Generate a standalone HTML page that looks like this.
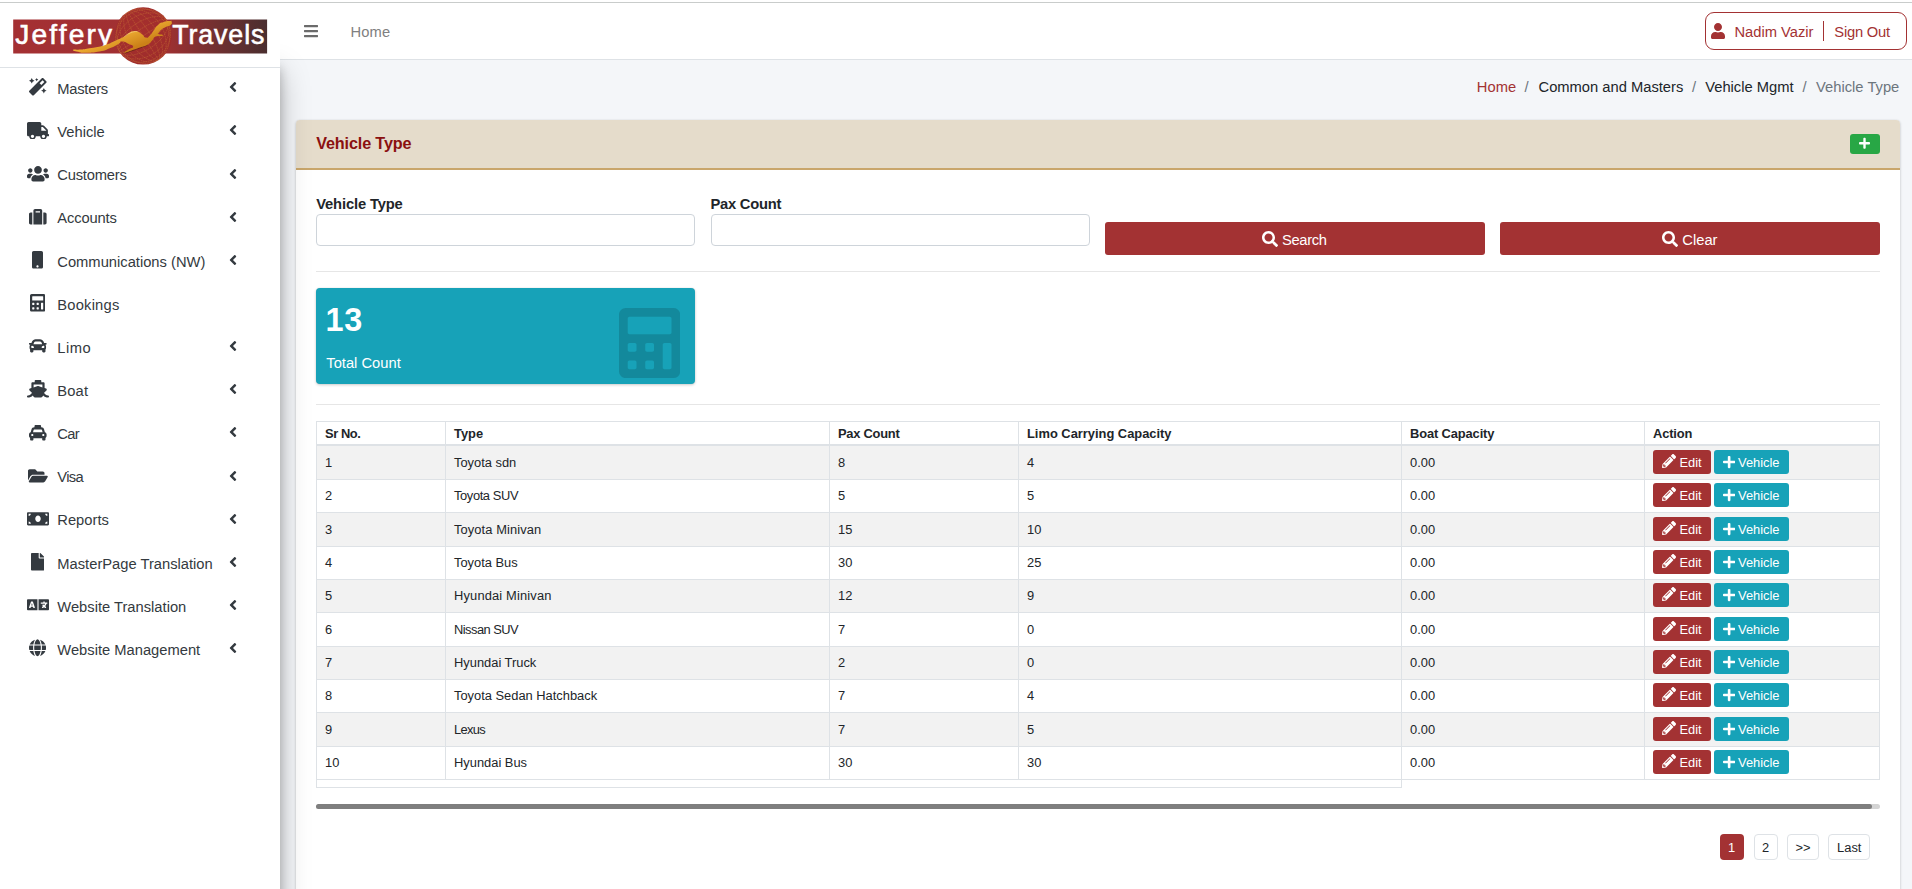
<!DOCTYPE html><html lang="en"><head><meta charset="utf-8"><title>Vehicle Type</title><style>
html,body{margin:0;padding:0}
body{width:1912px;height:889px;overflow:hidden;position:relative;background:#f4f6f9;font-family:"Liberation Sans", sans-serif;}
.t{position:absolute;white-space:nowrap;line-height:1;margin:0;padding:0;font-weight:400;text-decoration:none}
.b,.i{position:absolute;box-sizing:border-box;display:block}

</style></head><body>
<div class="b" style="left:0px;top:0px;width:1912px;height:60px;background:#fff;border-bottom:1px solid #dee2e6;"></div>
<div class="b" style="left:0px;top:2px;width:1912px;height:1px;background:#c9cccb;"></div>
<nav>
<svg class="i" style="left:304.00px;top:23.00px;" width="14.00" height="16.00" viewBox="0 0 448 512"><path fill="#6b6b6b" d="M16 132h416c8.837 0 16-7.163 16-16V76c0-8.837-7.163-16-16-16H16C7.163 60 0 67.163 0 76v40c0 8.837 7.163 16 16 16zm0 160h416c8.837 0 16-7.163 16-16v-40c0-8.837-7.163-16-16-16H16c-8.837 0-16 7.163-16 16v40c0 8.837 7.163 16 16 16zm0 160h416c8.837 0 16-7.163 16-16v-40c0-8.837-7.163-16-16-16H16c-8.837 0-16 7.163-16 16v40c0 8.837 7.163 16 16 16z"/></svg>
<a class="t " style="top:24.94px;font-size:14.72px;color:#808080;left:350.60px;letter-spacing:0.1px;">Home</a>
<div class="b" style="left:1705px;top:12px;width:202px;height:38px;border:1px solid #a33233;border-radius:9px;background:#fff;"></div>
<svg class="i" style="left:1711.30px;top:23.00px;" width="14.00" height="16.00" viewBox="0 0 448 512"><path fill="#a33233" d="M224 256c70.700 0 128-57.300 128-128S294.700 0 224 0 96 57.300 96 128s57.300 128 128 128zm89.600 32h-16.700c-22.200 10.200-46.900 16-72.900 16s-50.600-5.800-72.900-16h-16.700C60.200 288 0 348.200 0 422.400V464c0 26.500 21.500 48 48 48h352c26.500 0 48-21.500 48-48v-41.600c0-74.200-60.200-134.400-134.400-134.400z"/></svg>
<span class="t " style="top:25.04px;font-size:14.72px;color:#a33233;left:1734.40px;">Nadim Vazir</span>
<div class="b" style="left:1823px;top:21px;width:1px;height:20px;background:#a33233;"></div>
<a class="t " style="top:25.04px;font-size:14.72px;color:#a33233;left:1834.30px;letter-spacing:-0.2px;">Sign Out</a>
</nav>
<ol style="margin:0;padding:0;list-style:none">
<li class="t " style="top:79.74px;font-size:14.72px;color:#a33233;left:1476.70px;letter-spacing:0.1px;">Home</li>
<li class="t " style="top:79.74px;font-size:14.72px;color:#6c757d;left:1524.40px;">/</li>
<li class="t " style="top:79.74px;font-size:14.72px;color:#212529;left:1538.50px;">Common and Masters</li>
<li class="t " style="top:79.74px;font-size:14.72px;color:#6c757d;left:1691.90px;">/</li>
<li class="t " style="top:79.74px;font-size:14.72px;color:#212529;left:1705.20px;">Vehicle Mgmt</li>
<li class="t " style="top:79.74px;font-size:14.72px;color:#6c757d;left:1802.50px;">/</li>
<li class="t " style="top:79.74px;font-size:14.72px;color:#6c757d;left:1816.10px;">Vehicle Type</li>
</ol>
<div class="b" style="left:296px;top:120px;width:1604px;height:800px;background:#fff;border-radius:4px;box-shadow:0 0 1px rgba(0,0,0,.125),0 1px 3px rgba(0,0,0,.2);"></div>
<div class="b" style="left:296px;top:120px;width:1604px;height:50px;background:#e5dccb;border-bottom:2px solid #c9a66b;border-radius:4px 4px 0 0;"></div>
<h3 class="t " style="top:134.59px;font-size:16.19px;color:#8b1010;left:316.20px;font-weight:700;letter-spacing:-0.14px;">Vehicle Type</h3>
<div class="b" style="left:1850px;top:134px;width:30px;height:20px;background:#28a745;border-radius:3px;"></div>
<svg class="i" style="left:1859.39px;top:137.40px;" width="11.03" height="12.60" viewBox="0 0 448 512"><path fill="#fff" d="M416 208H272V64c0-17.670-14.330-32-32-32h-32c-17.670 0-32 14.330-32 32v144H32c-17.670 0-32 14.330-32 32v32c0 17.670 14.330 32 32 32h144v144c0 17.670 14.330 32 32 32h32c17.670 0 32-14.330 32-32V304h144c17.670 0 32-14.330 32-32v-32c0-17.670-14.330-32-32-32z"/></svg>
<label class="t " style="top:196.64px;font-size:14.72px;color:#212529;left:316.20px;font-weight:700;letter-spacing:-0.14px;">Vehicle Type</label>
<label class="t " style="top:196.64px;font-size:14.72px;color:#212529;left:710.50px;font-weight:700;letter-spacing:-0.25px;">Pax Count</label>
<div class="b" style="left:316px;top:214px;width:379px;height:32px;background:#fff;border:1px solid #ced4da;border-radius:4px;"></div>
<div class="b" style="left:710.5px;top:214px;width:379px;height:32px;background:#fff;border:1px solid #ced4da;border-radius:4px;"></div>
<div class="b" style="left:1105px;top:222px;width:380px;height:33px;background:#a33233;border-radius:3px;"></div>
<div class="b" style="left:1500px;top:222px;width:380px;height:33px;background:#a33233;border-radius:3px;"></div>
<svg class="i" style="left:1262.00px;top:230.50px;" width="16.00" height="16.00" viewBox="0 0 512 512"><path fill="#fff" d="M505 442.700L405.300 343c-4.500-4.500-10.600-7-17-7H372c27.600-35.300 44-79.700 44-128C416 93.100 322.900 0 208 0S0 93.100 0 208s93.100 208 208 208c48.300 0 92.700-16.400 128-44v16.300c0 6.400 2.500 12.500 7 17l99.700 99.700c9.400 9.400 24.600 9.400 33.900 0l28.300-28.300c9.400-9.400 9.400-24.600.1-34zM208 336c-70.700 0-128-57.200-128-128 0-70.700 57.200-128 128-128 70.700 0 128 57.200 128 128 0 70.700-57.200 128-128 128z"/></svg>
<span class="t " style="top:233.14px;font-size:14.72px;color:#fff;left:1282.00px;letter-spacing:-0.32px;">Search</span>
<svg class="i" style="left:1662.30px;top:230.50px;" width="16.00" height="16.00" viewBox="0 0 512 512"><path fill="#fff" d="M505 442.700L405.300 343c-4.500-4.500-10.600-7-17-7H372c27.600-35.300 44-79.700 44-128C416 93.100 322.900 0 208 0S0 93.100 0 208s93.100 208 208 208c48.300 0 92.700-16.400 128-44v16.300c0 6.400 2.500 12.500 7 17l99.700 99.700c9.400 9.400 24.600 9.400 33.900 0l28.300-28.300c9.400-9.400 9.400-24.600.1-34zM208 336c-70.700 0-128-57.200-128-128 0-70.700 57.200-128 128-128 70.700 0 128 57.200 128 128 0 70.700-57.200 128-128 128z"/></svg>
<span class="t " style="top:233.14px;font-size:14.72px;color:#fff;left:1682.30px;">Clear</span>
<div class="b" style="left:316px;top:271px;width:1564px;height:1px;background:#e6e6e6;"></div>
<div class="b" style="left:316px;top:288px;width:379px;height:95.5px;background:#17a2b8;border-radius:4px;box-shadow:0 0 1px rgba(0,0,0,.125),0 1px 3px rgba(0,0,0,.2);"></div>
<h3 class="t " style="top:303.89px;font-size:32.38px;color:#fff;left:325.60px;font-weight:700;letter-spacing:0.7px;">13</h3>
<p class="t " style="top:356.24px;font-size:14.72px;color:#fff;left:326.30px;">Total Count</p>
<svg class="i" style="left:619.00px;top:308.00px;" width="61.25" height="70.00" viewBox="0 0 448 512"><path fill="rgba(0,0,0,.15)" d="M400 0H48C22.400 0 0 22.400 0 48v416c0 25.600 22.400 48 48 48h352c25.600 0 48-22.400 48-48V48c0-25.600-22.400-48-48-48zM128 435.200c0 6.400-6.400 12.800-12.800 12.800H76.800c-6.400 0-12.800-6.400-12.800-12.800v-38.400c0-6.400 6.400-12.800 12.800-12.800h38.400c6.400 0 12.800 6.400 12.800 12.800v38.400zm0-128c0 6.400-6.400 12.800-12.800 12.800H76.800c-6.400 0-12.800-6.400-12.800-12.800v-38.400c0-6.400 6.400-12.800 12.800-12.800h38.400c6.400 0 12.800 6.400 12.800 12.800v38.400zm128 128c0 6.400-6.400 12.800-12.800 12.800h-38.400c-6.400 0-12.800-6.400-12.800-12.800v-38.400c0-6.400 6.400-12.800 12.800-12.800h38.400c6.400 0 12.800 6.400 12.800 12.800v38.400zm0-128c0 6.400-6.400 12.800-12.800 12.800h-38.400c-6.400 0-12.800-6.400-12.800-12.800v-38.400c0-6.400 6.400-12.800 12.800-12.800h38.400c6.400 0 12.800 6.400 12.800 12.800v38.400zm128 128c0 6.400-6.400 12.800-12.800 12.800h-38.400c-6.400 0-12.800-6.400-12.800-12.800V268.800c0-6.400 6.400-12.800 12.800-12.800h38.400c6.400 0 12.800 6.400 12.800 12.800v166.400zm0-256c0 6.400-6.400 12.800-12.800 12.800H76.800c-6.400 0-12.800-6.400-12.800-12.800V76.800C64 70.400 70.400 64 76.800 64h294.400c6.400 0 12.800 6.400 12.800 12.800v102.400z"/></svg>
<div class="b" style="left:316px;top:404px;width:1564px;height:1px;background:#e6e6e6;"></div>
<div role="table">
<div class="b" style="left:316px;top:421px;width:1564px;height:1px;background:#dee2e6;"></div>
<div class="b" style="left:316px;top:444px;width:1564px;height:2px;background:#dee2e6;"></div>
<span class="t th" style="top:427.50px;font-size:12.88px;color:#212529;left:325.00px;font-weight:700;letter-spacing:-0.4px;">Sr No.</span>
<span class="t th" style="top:427.50px;font-size:12.88px;color:#212529;left:454.00px;font-weight:700;">Type</span>
<span class="t th" style="top:427.50px;font-size:12.88px;color:#212529;left:838.00px;font-weight:700;letter-spacing:-0.25px;">Pax Count</span>
<span class="t th" style="top:427.50px;font-size:12.88px;color:#212529;left:1027.00px;font-weight:700;">Limo Carrying Capacity</span>
<span class="t th" style="top:427.50px;font-size:12.88px;color:#212529;left:1410.00px;font-weight:700;letter-spacing:-0.12px;">Boat Capacity</span>
<span class="t th" style="top:427.50px;font-size:12.88px;color:#212529;left:1653.00px;font-weight:700;letter-spacing:-0.16px;">Action</span>
<div class="b" style="left:316px;top:446px;width:1564px;height:33px;background:#f2f2f2;"></div>
<div class="b" style="left:316px;top:479px;width:1564px;height:1px;background:#dee2e6;"></div>
<span class="t " style="top:457.10px;font-size:12.88px;color:#212529;left:325.00px;">1</span>
<span class="t " style="top:457.10px;font-size:12.88px;color:#212529;left:454.00px;">Toyota sdn</span>
<span class="t " style="top:457.10px;font-size:12.88px;color:#212529;left:838.00px;">8</span>
<span class="t " style="top:457.10px;font-size:12.88px;color:#212529;left:1027.00px;">4</span>
<span class="t " style="top:457.10px;font-size:12.88px;color:#212529;left:1410.00px;">0.00</span>
<div class="b" style="left:1653px;top:450px;width:58px;height:23.6px;background:#a33233;border-radius:3px;"></div>
<svg class="i" style="left:1661.60px;top:454.40px;" width="14.00" height="14.00" viewBox="0 0 512 512"><path fill="#fff" d="M497.900 142.100l-46.100 46.100c-4.700 4.700-12.300 4.700-17 0l-111-111c-4.700-4.700-4.700-12.300 0-17l46.100-46.100c18.700-18.700 49.100-18.700 67.900 0l60.100 60.100c18.800 18.700 18.800 49.100 0 67.900zM284.200 99.800L21.600 362.400.4 483.900c-2.900 16.400 11.400 30.600 27.800 27.800l121.500-21.300 262.600-262.600c4.700-4.700 4.700-12.300 0-17l-111-111c-4.800-4.700-12.400-4.700-17.100 0zM124.100 339.900c-5.500-5.500-5.500-14.300 0-19.800l154-154c5.500-5.500 14.300-5.500 19.800 0s5.500 14.300 0 19.800l-154 154c-5.500 5.500-14.300 5.500-19.800 0zM88 424h48v36.300l-64.500 11.300-31.100-31.100L51.700 376H88v48z"/></svg>
<span class="t " style="top:457.00px;font-size:12.88px;color:#fff;left:1679.40px;">Edit</span>
<div class="b" style="left:1714px;top:450px;width:75px;height:23.6px;background:#17a2b8;border-radius:3px;"></div>
<svg class="i" style="left:1722.70px;top:454.90px;" width="12.25" height="14.00" viewBox="0 0 448 512"><path fill="#fff" d="M416 208H272V64c0-17.670-14.330-32-32-32h-32c-17.670 0-32 14.330-32 32v144H32c-17.670 0-32 14.330-32 32v32c0 17.670 14.330 32 32 32h144v144c0 17.670 14.330 32 32 32h32c17.670 0 32-14.330 32-32V304h144c17.670 0 32-14.330 32-32v-32c0-17.670-14.330-32-32-32z"/></svg>
<span class="t " style="top:457.00px;font-size:12.88px;color:#fff;left:1738.00px;">Vehicle</span>
<div class="b" style="left:316px;top:512px;width:1564px;height:1px;background:#dee2e6;"></div>
<span class="t " style="top:490.43px;font-size:12.88px;color:#212529;left:325.00px;">2</span>
<span class="t " style="top:490.43px;font-size:12.88px;color:#212529;left:454.00px;letter-spacing:-0.38px;">Toyota SUV</span>
<span class="t " style="top:490.43px;font-size:12.88px;color:#212529;left:838.00px;">5</span>
<span class="t " style="top:490.43px;font-size:12.88px;color:#212529;left:1027.00px;">5</span>
<span class="t " style="top:490.43px;font-size:12.88px;color:#212529;left:1410.00px;">0.00</span>
<div class="b" style="left:1653px;top:483px;width:58px;height:23.6px;background:#a33233;border-radius:3px;"></div>
<svg class="i" style="left:1661.60px;top:487.40px;" width="14.00" height="14.00" viewBox="0 0 512 512"><path fill="#fff" d="M497.900 142.100l-46.100 46.100c-4.700 4.700-12.300 4.700-17 0l-111-111c-4.700-4.700-4.700-12.300 0-17l46.100-46.100c18.700-18.700 49.100-18.700 67.900 0l60.100 60.100c18.800 18.700 18.800 49.100 0 67.900zM284.200 99.800L21.600 362.400.4 483.900c-2.900 16.400 11.400 30.600 27.800 27.800l121.500-21.300 262.600-262.600c4.700-4.700 4.700-12.300 0-17l-111-111c-4.800-4.700-12.400-4.700-17.100 0zM124.100 339.900c-5.500-5.500-5.500-14.300 0-19.800l154-154c5.500-5.500 14.300-5.500 19.800 0s5.500 14.300 0 19.800l-154 154c-5.500 5.500-14.300 5.500-19.800 0zM88 424h48v36.300l-64.500 11.300-31.100-31.100L51.700 376H88v48z"/></svg>
<span class="t " style="top:490.33px;font-size:12.88px;color:#fff;left:1679.40px;">Edit</span>
<div class="b" style="left:1714px;top:483px;width:75px;height:23.6px;background:#17a2b8;border-radius:3px;"></div>
<svg class="i" style="left:1722.70px;top:487.90px;" width="12.25" height="14.00" viewBox="0 0 448 512"><path fill="#fff" d="M416 208H272V64c0-17.670-14.330-32-32-32h-32c-17.670 0-32 14.330-32 32v144H32c-17.670 0-32 14.330-32 32v32c0 17.670 14.330 32 32 32h144v144c0 17.670 14.330 32 32 32h32c17.670 0 32-14.330 32-32V304h144c17.670 0 32-14.330 32-32v-32c0-17.670-14.330-32-32-32z"/></svg>
<span class="t " style="top:490.33px;font-size:12.88px;color:#fff;left:1738.00px;">Vehicle</span>
<div class="b" style="left:316px;top:513px;width:1564px;height:33px;background:#f2f2f2;"></div>
<div class="b" style="left:316px;top:546px;width:1564px;height:1px;background:#dee2e6;"></div>
<span class="t " style="top:523.76px;font-size:12.88px;color:#212529;left:325.00px;">3</span>
<span class="t " style="top:523.76px;font-size:12.88px;color:#212529;left:454.00px;letter-spacing:0.1px;">Toyota Minivan</span>
<span class="t " style="top:523.76px;font-size:12.88px;color:#212529;left:838.00px;">15</span>
<span class="t " style="top:523.76px;font-size:12.88px;color:#212529;left:1027.00px;">10</span>
<span class="t " style="top:523.76px;font-size:12.88px;color:#212529;left:1410.00px;">0.00</span>
<div class="b" style="left:1653px;top:517px;width:58px;height:23.6px;background:#a33233;border-radius:3px;"></div>
<svg class="i" style="left:1661.60px;top:521.40px;" width="14.00" height="14.00" viewBox="0 0 512 512"><path fill="#fff" d="M497.900 142.100l-46.100 46.100c-4.700 4.700-12.300 4.700-17 0l-111-111c-4.700-4.700-4.700-12.300 0-17l46.100-46.100c18.700-18.700 49.100-18.700 67.900 0l60.100 60.100c18.800 18.700 18.800 49.100 0 67.900zM284.200 99.800L21.600 362.400.4 483.900c-2.900 16.400 11.400 30.600 27.800 27.800l121.500-21.300 262.600-262.600c4.700-4.700 4.700-12.300 0-17l-111-111c-4.800-4.700-12.400-4.700-17.100 0zM124.100 339.900c-5.500-5.500-5.500-14.300 0-19.800l154-154c5.500-5.500 14.300-5.500 19.800 0s5.500 14.300 0 19.800l-154 154c-5.500 5.500-14.300 5.500-19.800 0zM88 424h48v36.300l-64.500 11.300-31.100-31.100L51.700 376H88v48z"/></svg>
<span class="t " style="top:523.66px;font-size:12.88px;color:#fff;left:1679.40px;">Edit</span>
<div class="b" style="left:1714px;top:517px;width:75px;height:23.6px;background:#17a2b8;border-radius:3px;"></div>
<svg class="i" style="left:1722.70px;top:521.90px;" width="12.25" height="14.00" viewBox="0 0 448 512"><path fill="#fff" d="M416 208H272V64c0-17.670-14.330-32-32-32h-32c-17.670 0-32 14.330-32 32v144H32c-17.670 0-32 14.330-32 32v32c0 17.670 14.330 32 32 32h144v144c0 17.670 14.330 32 32 32h32c17.670 0 32-14.330 32-32V304h144c17.670 0 32-14.330 32-32v-32c0-17.670-14.330-32-32-32z"/></svg>
<span class="t " style="top:523.66px;font-size:12.88px;color:#fff;left:1738.00px;">Vehicle</span>
<div class="b" style="left:316px;top:579px;width:1564px;height:1px;background:#dee2e6;"></div>
<span class="t " style="top:557.10px;font-size:12.88px;color:#212529;left:325.00px;">4</span>
<span class="t " style="top:557.10px;font-size:12.88px;color:#212529;left:454.00px;">Toyota Bus</span>
<span class="t " style="top:557.10px;font-size:12.88px;color:#212529;left:838.00px;">30</span>
<span class="t " style="top:557.10px;font-size:12.88px;color:#212529;left:1027.00px;">25</span>
<span class="t " style="top:557.10px;font-size:12.88px;color:#212529;left:1410.00px;">0.00</span>
<div class="b" style="left:1653px;top:550px;width:58px;height:23.6px;background:#a33233;border-radius:3px;"></div>
<svg class="i" style="left:1661.60px;top:554.40px;" width="14.00" height="14.00" viewBox="0 0 512 512"><path fill="#fff" d="M497.900 142.100l-46.100 46.100c-4.700 4.700-12.300 4.700-17 0l-111-111c-4.700-4.700-4.700-12.300 0-17l46.100-46.100c18.700-18.700 49.100-18.700 67.900 0l60.100 60.100c18.800 18.700 18.800 49.100 0 67.900zM284.200 99.800L21.600 362.400.4 483.900c-2.900 16.400 11.400 30.600 27.800 27.800l121.500-21.300 262.600-262.600c4.700-4.700 4.700-12.300 0-17l-111-111c-4.800-4.700-12.400-4.700-17.100 0zM124.100 339.900c-5.500-5.500-5.500-14.300 0-19.800l154-154c5.500-5.500 14.300-5.500 19.800 0s5.500 14.300 0 19.800l-154 154c-5.500 5.500-14.300 5.500-19.800 0zM88 424h48v36.300l-64.500 11.300-31.100-31.100L51.700 376H88v48z"/></svg>
<span class="t " style="top:557.00px;font-size:12.88px;color:#fff;left:1679.40px;">Edit</span>
<div class="b" style="left:1714px;top:550px;width:75px;height:23.6px;background:#17a2b8;border-radius:3px;"></div>
<svg class="i" style="left:1722.70px;top:554.90px;" width="12.25" height="14.00" viewBox="0 0 448 512"><path fill="#fff" d="M416 208H272V64c0-17.670-14.330-32-32-32h-32c-17.670 0-32 14.330-32 32v144H32c-17.670 0-32 14.330-32 32v32c0 17.670 14.330 32 32 32h144v144c0 17.670 14.330 32 32 32h32c17.670 0 32-14.330 32-32V304h144c17.670 0 32-14.330 32-32v-32c0-17.670-14.330-32-32-32z"/></svg>
<span class="t " style="top:557.00px;font-size:12.88px;color:#fff;left:1738.00px;">Vehicle</span>
<div class="b" style="left:316px;top:580px;width:1564px;height:32px;background:#f2f2f2;"></div>
<div class="b" style="left:316px;top:612px;width:1564px;height:1px;background:#dee2e6;"></div>
<span class="t " style="top:590.43px;font-size:12.88px;color:#212529;left:325.00px;">5</span>
<span class="t " style="top:590.43px;font-size:12.88px;color:#212529;left:454.00px;letter-spacing:0.16px;">Hyundai Minivan</span>
<span class="t " style="top:590.43px;font-size:12.88px;color:#212529;left:838.00px;">12</span>
<span class="t " style="top:590.43px;font-size:12.88px;color:#212529;left:1027.00px;">9</span>
<span class="t " style="top:590.43px;font-size:12.88px;color:#212529;left:1410.00px;">0.00</span>
<div class="b" style="left:1653px;top:583px;width:58px;height:23.6px;background:#a33233;border-radius:3px;"></div>
<svg class="i" style="left:1661.60px;top:587.40px;" width="14.00" height="14.00" viewBox="0 0 512 512"><path fill="#fff" d="M497.900 142.100l-46.100 46.100c-4.700 4.700-12.300 4.700-17 0l-111-111c-4.700-4.700-4.700-12.300 0-17l46.100-46.100c18.700-18.700 49.100-18.700 67.900 0l60.100 60.100c18.800 18.700 18.800 49.100 0 67.900zM284.200 99.800L21.600 362.400.4 483.900c-2.900 16.400 11.400 30.600 27.800 27.800l121.500-21.300 262.600-262.600c4.700-4.700 4.700-12.300 0-17l-111-111c-4.800-4.700-12.400-4.700-17.100 0zM124.100 339.900c-5.500-5.500-5.500-14.300 0-19.800l154-154c5.500-5.500 14.300-5.500 19.800 0s5.500 14.300 0 19.800l-154 154c-5.500 5.500-14.300 5.500-19.800 0zM88 424h48v36.300l-64.500 11.300-31.100-31.100L51.700 376H88v48z"/></svg>
<span class="t " style="top:590.33px;font-size:12.88px;color:#fff;left:1679.40px;">Edit</span>
<div class="b" style="left:1714px;top:583px;width:75px;height:23.6px;background:#17a2b8;border-radius:3px;"></div>
<svg class="i" style="left:1722.70px;top:587.90px;" width="12.25" height="14.00" viewBox="0 0 448 512"><path fill="#fff" d="M416 208H272V64c0-17.670-14.330-32-32-32h-32c-17.670 0-32 14.330-32 32v144H32c-17.670 0-32 14.330-32 32v32c0 17.670 14.330 32 32 32h144v144c0 17.670 14.330 32 32 32h32c17.670 0 32-14.330 32-32V304h144c17.670 0 32-14.330 32-32v-32c0-17.670-14.330-32-32-32z"/></svg>
<span class="t " style="top:590.33px;font-size:12.88px;color:#fff;left:1738.00px;">Vehicle</span>
<div class="b" style="left:316px;top:646px;width:1564px;height:1px;background:#dee2e6;"></div>
<span class="t " style="top:623.76px;font-size:12.88px;color:#212529;left:325.00px;">6</span>
<span class="t " style="top:623.76px;font-size:12.88px;color:#212529;left:454.00px;letter-spacing:-0.53px;">Nissan SUV</span>
<span class="t " style="top:623.76px;font-size:12.88px;color:#212529;left:838.00px;">7</span>
<span class="t " style="top:623.76px;font-size:12.88px;color:#212529;left:1027.00px;">0</span>
<span class="t " style="top:623.76px;font-size:12.88px;color:#212529;left:1410.00px;">0.00</span>
<div class="b" style="left:1653px;top:617px;width:58px;height:23.6px;background:#a33233;border-radius:3px;"></div>
<svg class="i" style="left:1661.60px;top:621.40px;" width="14.00" height="14.00" viewBox="0 0 512 512"><path fill="#fff" d="M497.900 142.100l-46.100 46.100c-4.700 4.700-12.300 4.700-17 0l-111-111c-4.700-4.700-4.700-12.300 0-17l46.100-46.100c18.700-18.700 49.100-18.700 67.900 0l60.100 60.100c18.800 18.700 18.800 49.100 0 67.900zM284.200 99.800L21.600 362.400.4 483.900c-2.900 16.400 11.400 30.600 27.800 27.800l121.500-21.300 262.600-262.600c4.700-4.700 4.700-12.300 0-17l-111-111c-4.800-4.700-12.400-4.700-17.100 0zM124.100 339.900c-5.500-5.500-5.500-14.300 0-19.800l154-154c5.500-5.500 14.300-5.500 19.800 0s5.500 14.300 0 19.800l-154 154c-5.500 5.500-14.300 5.500-19.800 0zM88 424h48v36.300l-64.500 11.300-31.100-31.100L51.700 376H88v48z"/></svg>
<span class="t " style="top:623.66px;font-size:12.88px;color:#fff;left:1679.40px;">Edit</span>
<div class="b" style="left:1714px;top:617px;width:75px;height:23.6px;background:#17a2b8;border-radius:3px;"></div>
<svg class="i" style="left:1722.70px;top:621.90px;" width="12.25" height="14.00" viewBox="0 0 448 512"><path fill="#fff" d="M416 208H272V64c0-17.670-14.330-32-32-32h-32c-17.670 0-32 14.330-32 32v144H32c-17.670 0-32 14.330-32 32v32c0 17.670 14.330 32 32 32h144v144c0 17.670 14.330 32 32 32h32c17.670 0 32-14.330 32-32V304h144c17.670 0 32-14.330 32-32v-32c0-17.670-14.330-32-32-32z"/></svg>
<span class="t " style="top:623.66px;font-size:12.88px;color:#fff;left:1738.00px;">Vehicle</span>
<div class="b" style="left:316px;top:647px;width:1564px;height:32px;background:#f2f2f2;"></div>
<div class="b" style="left:316px;top:679px;width:1564px;height:1px;background:#dee2e6;"></div>
<span class="t " style="top:657.10px;font-size:12.88px;color:#212529;left:325.00px;">7</span>
<span class="t " style="top:657.10px;font-size:12.88px;color:#212529;left:454.00px;">Hyundai Truck</span>
<span class="t " style="top:657.10px;font-size:12.88px;color:#212529;left:838.00px;">2</span>
<span class="t " style="top:657.10px;font-size:12.88px;color:#212529;left:1027.00px;">0</span>
<span class="t " style="top:657.10px;font-size:12.88px;color:#212529;left:1410.00px;">0.00</span>
<div class="b" style="left:1653px;top:650px;width:58px;height:23.6px;background:#a33233;border-radius:3px;"></div>
<svg class="i" style="left:1661.60px;top:654.40px;" width="14.00" height="14.00" viewBox="0 0 512 512"><path fill="#fff" d="M497.900 142.100l-46.100 46.100c-4.700 4.700-12.300 4.700-17 0l-111-111c-4.700-4.700-4.700-12.300 0-17l46.100-46.100c18.700-18.700 49.100-18.700 67.900 0l60.100 60.100c18.800 18.700 18.800 49.100 0 67.900zM284.200 99.800L21.600 362.400.4 483.900c-2.900 16.400 11.400 30.600 27.800 27.800l121.500-21.300 262.600-262.600c4.700-4.700 4.700-12.300 0-17l-111-111c-4.800-4.700-12.400-4.700-17.100 0zM124.100 339.900c-5.500-5.500-5.500-14.300 0-19.800l154-154c5.500-5.500 14.300-5.500 19.800 0s5.500 14.300 0 19.800l-154 154c-5.500 5.500-14.300 5.500-19.800 0zM88 424h48v36.300l-64.500 11.300-31.100-31.100L51.700 376H88v48z"/></svg>
<span class="t " style="top:657.00px;font-size:12.88px;color:#fff;left:1679.40px;">Edit</span>
<div class="b" style="left:1714px;top:650px;width:75px;height:23.6px;background:#17a2b8;border-radius:3px;"></div>
<svg class="i" style="left:1722.70px;top:654.90px;" width="12.25" height="14.00" viewBox="0 0 448 512"><path fill="#fff" d="M416 208H272V64c0-17.670-14.330-32-32-32h-32c-17.670 0-32 14.330-32 32v144H32c-17.670 0-32 14.330-32 32v32c0 17.670 14.330 32 32 32h144v144c0 17.670 14.330 32 32 32h32c17.670 0 32-14.330 32-32V304h144c17.670 0 32-14.330 32-32v-32c0-17.670-14.330-32-32-32z"/></svg>
<span class="t " style="top:657.00px;font-size:12.88px;color:#fff;left:1738.00px;">Vehicle</span>
<div class="b" style="left:316px;top:712px;width:1564px;height:1px;background:#dee2e6;"></div>
<span class="t " style="top:690.43px;font-size:12.88px;color:#212529;left:325.00px;">8</span>
<span class="t " style="top:690.43px;font-size:12.88px;color:#212529;left:454.00px;">Toyota Sedan Hatchback</span>
<span class="t " style="top:690.43px;font-size:12.88px;color:#212529;left:838.00px;">7</span>
<span class="t " style="top:690.43px;font-size:12.88px;color:#212529;left:1027.00px;">4</span>
<span class="t " style="top:690.43px;font-size:12.88px;color:#212529;left:1410.00px;">0.00</span>
<div class="b" style="left:1653px;top:683px;width:58px;height:23.6px;background:#a33233;border-radius:3px;"></div>
<svg class="i" style="left:1661.60px;top:687.40px;" width="14.00" height="14.00" viewBox="0 0 512 512"><path fill="#fff" d="M497.900 142.100l-46.100 46.100c-4.700 4.700-12.300 4.700-17 0l-111-111c-4.700-4.700-4.700-12.300 0-17l46.100-46.100c18.700-18.700 49.100-18.700 67.900 0l60.100 60.100c18.800 18.700 18.800 49.100 0 67.900zM284.200 99.800L21.600 362.400.4 483.900c-2.900 16.400 11.400 30.600 27.800 27.800l121.500-21.300 262.600-262.600c4.700-4.700 4.700-12.300 0-17l-111-111c-4.800-4.700-12.400-4.700-17.100 0zM124.100 339.900c-5.500-5.500-5.500-14.300 0-19.800l154-154c5.500-5.500 14.300-5.500 19.800 0s5.500 14.300 0 19.800l-154 154c-5.500 5.500-14.300 5.500-19.800 0zM88 424h48v36.300l-64.500 11.300-31.100-31.100L51.700 376H88v48z"/></svg>
<span class="t " style="top:690.33px;font-size:12.88px;color:#fff;left:1679.40px;">Edit</span>
<div class="b" style="left:1714px;top:683px;width:75px;height:23.6px;background:#17a2b8;border-radius:3px;"></div>
<svg class="i" style="left:1722.70px;top:687.90px;" width="12.25" height="14.00" viewBox="0 0 448 512"><path fill="#fff" d="M416 208H272V64c0-17.670-14.330-32-32-32h-32c-17.670 0-32 14.330-32 32v144H32c-17.670 0-32 14.330-32 32v32c0 17.670 14.330 32 32 32h144v144c0 17.670 14.330 32 32 32h32c17.670 0 32-14.330 32-32V304h144c17.670 0 32-14.330 32-32v-32c0-17.670-14.330-32-32-32z"/></svg>
<span class="t " style="top:690.33px;font-size:12.88px;color:#fff;left:1738.00px;">Vehicle</span>
<div class="b" style="left:316px;top:713px;width:1564px;height:33px;background:#f2f2f2;"></div>
<div class="b" style="left:316px;top:746px;width:1564px;height:1px;background:#dee2e6;"></div>
<span class="t " style="top:723.76px;font-size:12.88px;color:#212529;left:325.00px;">9</span>
<span class="t " style="top:723.76px;font-size:12.88px;color:#212529;left:454.00px;letter-spacing:-0.65px;">Lexus</span>
<span class="t " style="top:723.76px;font-size:12.88px;color:#212529;left:838.00px;">7</span>
<span class="t " style="top:723.76px;font-size:12.88px;color:#212529;left:1027.00px;">5</span>
<span class="t " style="top:723.76px;font-size:12.88px;color:#212529;left:1410.00px;">0.00</span>
<div class="b" style="left:1653px;top:717px;width:58px;height:23.6px;background:#a33233;border-radius:3px;"></div>
<svg class="i" style="left:1661.60px;top:721.40px;" width="14.00" height="14.00" viewBox="0 0 512 512"><path fill="#fff" d="M497.900 142.100l-46.100 46.100c-4.700 4.700-12.300 4.700-17 0l-111-111c-4.700-4.700-4.700-12.300 0-17l46.100-46.100c18.700-18.700 49.100-18.700 67.900 0l60.100 60.100c18.800 18.700 18.800 49.100 0 67.900zM284.200 99.800L21.600 362.400.4 483.900c-2.900 16.400 11.400 30.600 27.800 27.800l121.500-21.300 262.600-262.600c4.700-4.700 4.700-12.300 0-17l-111-111c-4.800-4.700-12.400-4.700-17.100 0zM124.100 339.900c-5.500-5.500-5.500-14.300 0-19.800l154-154c5.500-5.500 14.300-5.500 19.800 0s5.500 14.300 0 19.800l-154 154c-5.500 5.500-14.300 5.500-19.800 0zM88 424h48v36.300l-64.500 11.300-31.100-31.100L51.700 376H88v48z"/></svg>
<span class="t " style="top:723.66px;font-size:12.88px;color:#fff;left:1679.40px;">Edit</span>
<div class="b" style="left:1714px;top:717px;width:75px;height:23.6px;background:#17a2b8;border-radius:3px;"></div>
<svg class="i" style="left:1722.70px;top:721.90px;" width="12.25" height="14.00" viewBox="0 0 448 512"><path fill="#fff" d="M416 208H272V64c0-17.670-14.330-32-32-32h-32c-17.670 0-32 14.330-32 32v144H32c-17.670 0-32 14.330-32 32v32c0 17.670 14.330 32 32 32h144v144c0 17.670 14.330 32 32 32h32c17.670 0 32-14.330 32-32V304h144c17.670 0 32-14.330 32-32v-32c0-17.670-14.330-32-32-32z"/></svg>
<span class="t " style="top:723.66px;font-size:12.88px;color:#fff;left:1738.00px;">Vehicle</span>
<div class="b" style="left:316px;top:779px;width:1564px;height:1px;background:#dee2e6;"></div>
<span class="t " style="top:757.09px;font-size:12.88px;color:#212529;left:325.00px;">10</span>
<span class="t " style="top:757.09px;font-size:12.88px;color:#212529;left:454.00px;">Hyundai Bus</span>
<span class="t " style="top:757.09px;font-size:12.88px;color:#212529;left:838.00px;">30</span>
<span class="t " style="top:757.09px;font-size:12.88px;color:#212529;left:1027.00px;">30</span>
<span class="t " style="top:757.09px;font-size:12.88px;color:#212529;left:1410.00px;">0.00</span>
<div class="b" style="left:1653px;top:750px;width:58px;height:23.6px;background:#a33233;border-radius:3px;"></div>
<svg class="i" style="left:1661.60px;top:754.40px;" width="14.00" height="14.00" viewBox="0 0 512 512"><path fill="#fff" d="M497.900 142.100l-46.100 46.100c-4.700 4.700-12.300 4.700-17 0l-111-111c-4.700-4.700-4.700-12.300 0-17l46.100-46.100c18.700-18.700 49.100-18.700 67.900 0l60.100 60.100c18.800 18.700 18.800 49.100 0 67.900zM284.200 99.800L21.600 362.400.4 483.900c-2.900 16.400 11.400 30.600 27.800 27.800l121.500-21.300 262.600-262.600c4.700-4.700 4.700-12.300 0-17l-111-111c-4.800-4.700-12.400-4.700-17.100 0zM124.100 339.900c-5.500-5.500-5.500-14.300 0-19.800l154-154c5.500-5.500 14.300-5.500 19.800 0s5.500 14.300 0 19.800l-154 154c-5.500 5.500-14.300 5.500-19.800 0zM88 424h48v36.300l-64.500 11.300-31.100-31.100L51.700 376H88v48z"/></svg>
<span class="t " style="top:756.99px;font-size:12.88px;color:#fff;left:1679.40px;">Edit</span>
<div class="b" style="left:1714px;top:750px;width:75px;height:23.6px;background:#17a2b8;border-radius:3px;"></div>
<svg class="i" style="left:1722.70px;top:754.90px;" width="12.25" height="14.00" viewBox="0 0 448 512"><path fill="#fff" d="M416 208H272V64c0-17.670-14.330-32-32-32h-32c-17.670 0-32 14.330-32 32v144H32c-17.670 0-32 14.330-32 32v32c0 17.670 14.330 32 32 32h144v144c0 17.670 14.330 32 32 32h32c17.670 0 32-14.330 32-32V304h144c17.670 0 32-14.330 32-32v-32c0-17.670-14.330-32-32-32z"/></svg>
<span class="t " style="top:756.99px;font-size:12.88px;color:#fff;left:1738.00px;">Vehicle</span>
<div class="b" style="left:316px;top:779px;width:1086px;height:9px;border:1px solid #dee2e6;border-top:0;"></div>
<div class="b" style="left:316px;top:421px;width:1px;height:359px;background:#dee2e6;"></div>
<div class="b" style="left:445px;top:421px;width:1px;height:359px;background:#dee2e6;"></div>
<div class="b" style="left:829px;top:421px;width:1px;height:359px;background:#dee2e6;"></div>
<div class="b" style="left:1018px;top:421px;width:1px;height:359px;background:#dee2e6;"></div>
<div class="b" style="left:1401px;top:421px;width:1px;height:359px;background:#dee2e6;"></div>
<div class="b" style="left:1644px;top:421px;width:1px;height:359px;background:#dee2e6;"></div>
<div class="b" style="left:1879px;top:421px;width:1px;height:359px;background:#dee2e6;"></div>
</div>
<div class="b" style="left:316px;top:804px;width:1564px;height:5px;background:#d4d4d4;border-radius:3px;"></div>
<div class="b" style="left:316px;top:804px;width:1556px;height:5px;background:#7f7f7f;border-radius:3px;"></div>
<div class="b" style="left:1719.5px;top:834px;width:24px;height:26px;background:#a33233;border-radius:4px;"></div>
<span class="t" style="left:1719.5px;width:24px;text-align:center;top:841.60px;font-size:12.88px;color:#fff">1</span>
<div class="b" style="left:1753.5px;top:834px;width:24px;height:26px;background:#fff;border:1px solid #dee2e6;border-radius:4px;"></div>
<span class="t" style="left:1753.5px;width:24px;text-align:center;top:841.60px;font-size:12.88px;color:#212529">2</span>
<div class="b" style="left:1787.3px;top:834px;width:31.3px;height:26px;background:#fff;border:1px solid #dee2e6;border-radius:4px;"></div>
<span class="t" style="left:1787.3px;width:31.3px;text-align:center;top:841.60px;font-size:12.88px;color:#212529">&gt;&gt;</span>
<div class="b" style="left:1828.2px;top:834px;width:42.2px;height:26px;background:#fff;border:1px solid #dee2e6;border-radius:4px;"></div>
<span class="t" style="left:1828.2px;width:42.2px;text-align:center;top:841.60px;font-size:12.88px;color:#212529">Last</span>
<aside>
<div class="b" style="left:0px;top:58px;width:280px;height:900px;background:#fff;box-shadow:0 14px 28px rgba(0,0,0,.25),0 10px 10px rgba(0,0,0,.22);"></div>
<div class="b" style="left:0px;top:3px;width:280px;height:65px;background:#fff;border-bottom:1px solid #dee2e6;"></div>
<svg class="i" style="left:0;top:3px" width="280" height="64" viewBox="0 3 280 64">
<defs><linearGradient id="lg" gradientUnits="userSpaceOnUse" x1="13" x2="267" y1="0" y2="0"><stop offset="0" stop-color="#a43033"/><stop offset=".6" stop-color="#a03032"/><stop offset=".72" stop-color="#833031"/><stop offset=".86" stop-color="#653030"/><stop offset="1" stop-color="#4a2e2f"/></linearGradient>
<radialGradient id="rg" cx=".42" cy=".4" r=".7"><stop offset="0" stop-color="#a7312f"/><stop offset="1" stop-color="#9d2b2b"/></radialGradient>
<linearGradient id="gd" gradientUnits="userSpaceOnUse" x1="100" y1="25" x2="112" y2="56"><stop offset="0" stop-color="#fbe08e"/><stop offset=".45" stop-color="#efae34"/><stop offset="1" stop-color="#cb8118"/></linearGradient>
<clipPath id="cc"><circle cx="143.1" cy="35.9" r="28.7"/></clipPath></defs>
<rect x="13.2" y="19.5" width="253.9" height="34" fill="url(#lg)"/>
<circle cx="143.1" cy="35.9" r="28.7" fill="url(#rg)"/>
<g clip-path="url(#cc)"><g fill="none" stroke="#dc943a" stroke-width=".45" stroke-dasharray="1.7 .7" opacity=".6" transform="rotate(-33 143.1 35.9)"><ellipse cx="143.1" cy="35.9" rx="28.3" ry="7"/><ellipse cx="143.1" cy="35.9" rx="7" ry="28.3"/><ellipse cx="143.1" cy="35.9" rx="28.3" ry="14"/><ellipse cx="143.1" cy="35.9" rx="14" ry="28.3"/><ellipse cx="143.1" cy="35.9" rx="28.3" ry="20.5"/><ellipse cx="143.1" cy="35.9" rx="20.5" ry="28.3"/><ellipse cx="143.1" cy="35.9" rx="28.3" ry="25.5"/><ellipse cx="143.1" cy="35.9" rx="25.5" ry="28.3"/><line x1="114.39999999999999" y1="35.9" x2="171.79999999999998" y2="35.9"/><line x1="143.1" y1="7.199999999999999" x2="143.1" y2="64.6"/></g></g>
<g font-family="Liberation Sans, sans-serif" font-size="26.800" fill="#fff" stroke="#fff" stroke-width=".55">
<text transform="translate(15.200 44.200) scale(1.05 1)" textLength="92.300" lengthAdjust="spacing">Jeffery</text>
<text transform="translate(172.200 44.200)" textLength="92.200" lengthAdjust="spacing">Travels</text></g>
<path d="M124.6 53.1C133 50.4 141 48 147.5 45" fill="none" stroke="#5e2410" stroke-width=".9" opacity=".8"/>
<path d="M157.500 34.800C159.500 36.300 161 36.300 162.300 35" fill="none" stroke="#5e2410" stroke-width=".6" opacity=".7"/>
<path fill="url(#gd)" d="M73.20 49.80C74.20 49.07 75.67 50.10 81.00 49.60C86.33 49.10 81.57 49.70 89.20 48.30C96.83 46.90 95.37 47.83 103.90 45.40C112.43 42.97 108.00 43.93 114.80 41.00C121.60 38.07 119.57 39.27 124.30 36.60C129.03 33.93 126.07 34.77 129.00 33.00C131.93 31.23 130.27 31.77 133.10 31.30C135.93 30.83 134.57 30.63 137.50 31.60C140.43 32.57 139.07 32.20 141.90 34.20C144.73 36.20 143.33 37.17 146.00 37.60C148.67 38.03 147.37 37.83 149.90 35.50C152.43 33.17 150.90 34.13 153.60 30.60C156.30 27.07 154.60 27.77 158.00 24.90C161.40 22.03 159.90 23.30 163.80 22.00C167.70 20.70 167.10 21.10 169.70 21.00C172.30 20.90 171.30 20.40 171.60 21.70C171.90 23.00 172.53 23.17 170.60 24.90C168.67 26.63 168.80 25.40 165.80 26.90C162.80 28.40 163.90 27.50 161.60 29.40C159.30 31.30 160.03 31.03 158.90 32.60C157.77 34.17 156.97 33.40 158.20 34.10C159.43 34.80 161.53 34.03 162.60 34.70C163.67 35.37 163.73 35.47 161.40 36.10C159.07 36.73 158.73 35.03 155.60 36.60C152.47 38.17 154.73 38.07 152.00 40.80C149.27 43.53 151.27 42.63 147.40 44.80C143.53 46.97 145.53 45.50 140.40 47.30C135.27 49.10 137.30 48.43 132.00 50.20C126.70 51.97 125.67 52.80 124.50 52.60C123.33 52.40 125.63 51.57 128.50 49.60C131.37 47.63 132.77 48.47 133.10 46.70C133.43 44.93 133.17 46.07 129.50 44.30C125.83 42.53 125.77 41.53 122.10 41.40C118.43 41.27 122.63 41.60 118.50 43.90C114.37 46.20 116.03 45.73 109.70 48.30C103.37 50.87 107.53 50.13 99.50 51.60C91.47 53.07 92.77 52.63 85.60 52.70C78.43 52.77 82.13 52.77 78.00 51.80C73.87 50.83 72.20 50.53 73.20 49.80Z"/>
<path d="M124.300 36.600C128 33.500 133 31 137.500 31.600" fill="none" stroke="#f9dc96" stroke-width=".7" opacity=".8"/>
</svg>
<ul style="margin:0;padding:0;list-style:none">
<li>
<svg class="i" style="left:28.95px;top:78.40px;" width="17.60" height="17.60" viewBox="0 0 512 512"><path fill="#343a40" d="M224 96l16-32 32-16-32-16-16-32-16 32-32 16 32 16 16 32zM80 160l26.660-53.330L160 80l-53.340-26.670L80 0 53.340 53.330 0 80l53.340 26.670L80 160zm352 128l-26.660 53.330L352 368l53.340 26.670L432 448l26.660-53.330L512 368l-53.340-26.670L432 288zm70.620-193.770L417.770 9.380C411.530 3.120 403.340 0 395.150 0c-8.190 0-16.380 3.120-22.630 9.380L9.380 372.520c-12.500 12.500-12.500 32.760 0 45.250l84.850 84.850c6.250 6.250 14.440 9.370 22.620 9.370 8.190 0 16.380-3.120 22.630-9.370l363.140-363.150c12.500-12.480 12.500-32.750 0-45.240zM359.450 203.460l-50.910-50.910 86.600-86.600 50.910 50.910-86.600 86.600z"/></svg>
<p class="t " style="top:81.94px;font-size:14.72px;color:#343a40;left:57.30px;letter-spacing:-0.25px;">Masters</p>
<svg class="i" style="left:228.90px;top:79.20px;" width="8.00" height="16.00" viewBox="0 0 256 512"><path fill="#343a40" d="M31.700 239l136-136c9.400-9.400 24.600-9.400 33.900 0l22.600 22.600c9.400 9.400 9.400 24.600 0 33.900L127.900 256l96.400 96.400c9.400 9.400 9.400 24.600 0 33.900L201.700 409c-9.400 9.400-24.600 9.400-33.900 0l-136-136c-9.500-9.400-9.500-24.600-.1-34z"/></svg>
</li>
<li>
<svg class="i" style="left:26.75px;top:121.55px;" width="22.00" height="17.60" viewBox="0 0 640 512"><path fill="#343a40" d="M624 352h-16V243.9c0-12.7-5.1-24.9-14.1-33.9L494 110.100c-9-9-21.200-14.100-33.900-14.100H416V48c0-26.500-21.500-48-48-48H48C21.500 0 0 21.500 0 48v320c0 26.500 21.500 48 48 48h16c0 53 43 96 96 96s96-43 96-96h128c0 53 43 96 96 96s96-43 96-96h48c8.800 0 16-7.200 16-16v-32c0-8.800-7.200-16-16-16zM160 464c-26.500 0-48-21.500-48-48s21.500-48 48-48 48 21.500 48 48-21.500 48-48 48zm320 0c-26.500 0-48-21.500-48-48s21.500-48 48-48 48 21.500 48 48-21.500 48-48 48zm80-208H416V144h44.100l99.900 99.900V256z"/></svg>
<p class="t " style="top:125.09px;font-size:14.72px;color:#343a40;left:57.30px;">Vehicle</p>
<svg class="i" style="left:228.90px;top:122.35px;" width="8.00" height="16.00" viewBox="0 0 256 512"><path fill="#343a40" d="M31.700 239l136-136c9.400-9.400 24.600-9.400 33.900 0l22.600 22.600c9.400 9.400 9.400 24.600 0 33.900L127.900 256l96.400 96.400c9.400 9.400 9.400 24.600 0 33.900L201.700 409c-9.400 9.400-24.600 9.400-33.900 0l-136-136c-9.500-9.400-9.500-24.600-.1-34z"/></svg>
</li>
<li>
<svg class="i" style="left:26.75px;top:164.70px;" width="22.00" height="17.60" viewBox="0 0 640 512"><path fill="#343a40" d="M96 224c35.300 0 64-28.700 64-64s-28.700-64-64-64-64 28.700-64 64 28.700 64 64 64zm448 0c35.300 0 64-28.700 64-64s-28.700-64-64-64-64 28.700-64 64 28.700 64 64 64zm32 32h-64c-17.600 0-33.500 7.100-45.100 18.600 40.300 22.100 68.900 62 75.100 109.400h66c17.700 0 32-14.300 32-32v-32c0-35.300-28.700-64-64-64zm-256 0c61.900 0 112-50.100 112-112S381.900 32 320 32 208 82.100 208 144s50.100 112 112 112zm76.800 32h-8.300c-20.800 10-43.900 16-68.500 16s-47.600-6-68.500-16h-8.300C179.600 288 128 339.600 128 403.200V432c0 26.500 21.500 48 48 48h288c26.500 0 48-21.500 48-48v-28.800c0-63.600-51.600-115.200-115.200-115.200zm-223.700-13.400C161.500 263.100 145.600 256 128 256H64c-35.300 0-64 28.700-64 64v32c0 17.700 14.300 32 32 32h65.900c6.300-47.400 34.900-87.300 75.200-109.400z"/></svg>
<p class="t " style="top:168.24px;font-size:14.72px;color:#343a40;left:57.30px;letter-spacing:-0.2px;">Customers</p>
<svg class="i" style="left:228.90px;top:165.50px;" width="8.00" height="16.00" viewBox="0 0 256 512"><path fill="#343a40" d="M31.700 239l136-136c9.400-9.400 24.600-9.400 33.900 0l22.600 22.600c9.400 9.400 9.400 24.600 0 33.900L127.900 256l96.400 96.400c9.400 9.400 9.400 24.600 0 33.900L201.700 409c-9.400 9.400-24.600 9.400-33.900 0l-136-136c-9.500-9.400-9.500-24.600-.1-34z"/></svg>
</li>
<li>
<svg class="i" style="left:28.95px;top:207.85px;" width="17.60" height="17.60" viewBox="0 0 512 512"><path fill="#343a40" d="M128 480h256V80c0-26.500-21.500-48-48-48H176c-26.500 0-48 21.500-48 48v400zm64-384h128v32H192V96zm320 80v256c0 26.500-21.500 48-48 48h-48V128h48c26.500 0 48 21.500 48 48zM96 480H48c-26.500 0-48-21.500-48-48V176c0-26.500 21.500-48 48-48h48v352z"/></svg>
<p class="t " style="top:211.39px;font-size:14.72px;color:#343a40;left:57.30px;letter-spacing:-0.15px;">Accounts</p>
<svg class="i" style="left:228.90px;top:208.65px;" width="8.00" height="16.00" viewBox="0 0 256 512"><path fill="#343a40" d="M31.700 239l136-136c9.400-9.400 24.600-9.400 33.900 0l22.600 22.600c9.400 9.400 9.400 24.600 0 33.900L127.900 256l96.400 96.400c9.400 9.400 9.400 24.600 0 33.900L201.700 409c-9.400 9.400-24.600 9.400-33.900 0l-136-136c-9.500-9.400-9.500-24.600-.1-34z"/></svg>
</li>
<li>
<svg class="i" style="left:32.25px;top:251.00px;" width="11.00" height="17.60" viewBox="0 0 320 512"><path fill="#343a40" d="M272 0H48C21.500 0 0 21.500 0 48v416c0 26.500 21.500 48 48 48h224c26.500 0 48-21.500 48-48V48c0-26.500-21.500-48-48-48zM160 480c-17.700 0-32-14.300-32-32s14.300-32 32-32 32 14.300 32 32-14.300 32-32 32z"/></svg>
<p class="t " style="top:254.54px;font-size:14.72px;color:#343a40;left:57.30px;">Communications (NW)</p>
<svg class="i" style="left:228.90px;top:251.80px;" width="8.00" height="16.00" viewBox="0 0 256 512"><path fill="#343a40" d="M31.700 239l136-136c9.400-9.400 24.600-9.400 33.900 0l22.600 22.600c9.400 9.400 9.400 24.600 0 33.900L127.900 256l96.400 96.400c9.400 9.400 9.400 24.600 0 33.900L201.700 409c-9.400 9.400-24.600 9.400-33.900 0l-136-136c-9.500-9.400-9.500-24.600-.1-34z"/></svg>
</li>
<li>
<svg class="i" style="left:30.05px;top:294.15px;" width="15.40" height="17.60" viewBox="0 0 448 512"><path fill="#343a40" d="M400 0H48C22.400 0 0 22.400 0 48v416c0 25.600 22.400 48 48 48h352c25.600 0 48-22.400 48-48V48c0-25.600-22.400-48-48-48zM128 435.200c0 6.400-6.400 12.800-12.800 12.800H76.800c-6.400 0-12.800-6.400-12.800-12.800v-38.400c0-6.400 6.400-12.800 12.800-12.800h38.400c6.400 0 12.800 6.400 12.800 12.800v38.400zm0-128c0 6.400-6.400 12.800-12.800 12.800H76.800c-6.400 0-12.800-6.400-12.800-12.800v-38.400c0-6.400 6.400-12.800 12.800-12.800h38.400c6.400 0 12.800 6.400 12.800 12.800v38.400zm128 128c0 6.400-6.400 12.800-12.800 12.800h-38.400c-6.400 0-12.800-6.400-12.800-12.800v-38.400c0-6.400 6.400-12.800 12.800-12.800h38.400c6.400 0 12.800 6.400 12.800 12.800v38.400zm0-128c0 6.400-6.400 12.800-12.800 12.800h-38.400c-6.400 0-12.800-6.400-12.800-12.800v-38.400c0-6.400 6.400-12.800 12.800-12.800h38.400c6.400 0 12.800 6.400 12.800 12.800v38.400zm128 128c0 6.400-6.400 12.800-12.800 12.800h-38.400c-6.400 0-12.800-6.400-12.800-12.800V268.800c0-6.400 6.400-12.800 12.800-12.800h38.400c6.400 0 12.800 6.400 12.800 12.800v166.400zm0-256c0 6.400-6.400 12.800-12.800 12.800H76.800c-6.400 0-12.800-6.400-12.800-12.800V76.800C64 70.400 70.400 64 76.800 64h294.400c6.400 0 12.800 6.400 12.800 12.800v102.400z"/></svg>
<p class="t " style="top:297.69px;font-size:14.72px;color:#343a40;left:57.30px;letter-spacing:0.2px;">Bookings</p>
</li>
<li>
<svg class="i" style="left:28.95px;top:337.30px;" width="17.60" height="17.60" viewBox="0 0 512 512"><path fill="#343a40" d="M499.990 176h-59.870l-16.640-41.600C406.380 91.630 365.570 64 319.500 64h-127c-46.060 0-86.880 27.630-103.990 70.400L71.870 176H12.010C4.200 176-1.530 183.340.37 190.910l6 24C7.700 220.250 12.500 224 18.010 224h20.070C24.650 235.730 16 252.780 16 272v48c0 16.120 6.160 30.670 16 41.930V416c0 17.670 14.330 32 32 32h32c17.670 0 32-14.330 32-32v-32h256v32c0 17.670 14.330 32 32 32h32c17.670 0 32-14.330 32-32v-54.070c9.840-11.250 16-25.800 16-41.930v-48c0-19.220-8.650-36.270-22.070-48H494c5.510 0 10.310-3.750 11.640-9.090l6-24c1.890-7.570-3.840-14.910-11.650-14.910zm-352.060-17.830c7.290-18.220 24.940-30.170 44.570-30.170h127c19.630 0 37.280 11.950 44.570 30.170L384 208H128l19.930-49.830zM96 319.800c-19.200 0-32-12.760-32-31.900S76.800 256 96 256s48 28.710 48 47.850-28.800 15.950-48 15.950zm320 0c-19.200 0-48 3.190-48-15.950S396.800 256 416 256s32 12.760 32 31.900-12.800 31.900-32 31.900z"/></svg>
<p class="t " style="top:340.84px;font-size:14.72px;color:#343a40;left:57.30px;letter-spacing:0.5px;">Limo</p>
<svg class="i" style="left:228.90px;top:338.10px;" width="8.00" height="16.00" viewBox="0 0 256 512"><path fill="#343a40" d="M31.700 239l136-136c9.400-9.400 24.600-9.400 33.900 0l22.600 22.600c9.400 9.400 9.400 24.600 0 33.900L127.900 256l96.400 96.400c9.400 9.400 9.400 24.600 0 33.900L201.700 409c-9.400 9.400-24.600 9.400-33.900 0l-136-136c-9.500-9.400-9.500-24.600-.1-34z"/></svg>
</li>
<li>
<svg class="i" style="left:26.75px;top:380.45px;" width="22.00" height="17.60" viewBox="0 0 640 512"><path fill="#343a40" d="M496.616 372.639l70.012-70.012c16.899-16.900 9.942-45.771-12.836-53.092L512 236.102V96c0-17.673-14.327-32-32-32h-64V24c0-13.255-10.745-24-24-24H248c-13.255 0-24 10.745-24 24v40h-64c-17.673 0-32 14.327-32 32v140.102l-41.792 13.433c-22.753 7.313-29.754 36.173-12.836 53.092l70.012 70.012C125.828 416.287 85.587 448 24 448c-13.255 0-24 10.745-24 24v16c0 13.255 10.745 24 24 24 61.023 0 107.499-20.610 143.258-59.396C181.677 487.432 216.021 512 256 512h128c39.979 0 74.323-24.568 88.742-59.396C508.495 491.384 554.968 512 616 512c13.255 0 24-10.745 24-24v-16c0-13.255-10.745-24-24-24-60.817 0-101.542-31.001-119.384-75.361zM192 128h256v87.531l-118.208-37.995a31.995 31.995 0 0 0-19.584 0L192 215.531V128z"/></svg>
<p class="t " style="top:383.99px;font-size:14.72px;color:#343a40;left:57.30px;letter-spacing:0.15px;">Boat</p>
<svg class="i" style="left:228.90px;top:381.25px;" width="8.00" height="16.00" viewBox="0 0 256 512"><path fill="#343a40" d="M31.700 239l136-136c9.400-9.400 24.600-9.400 33.900 0l22.600 22.600c9.400 9.400 9.400 24.600 0 33.900L127.900 256l96.400 96.400c9.400 9.400 9.400 24.600 0 33.900L201.700 409c-9.400 9.400-24.600 9.400-33.900 0l-136-136c-9.500-9.400-9.500-24.600-.1-34z"/></svg>
</li>
<li>
<svg class="i" style="left:28.95px;top:423.60px;" width="17.60" height="17.60" viewBox="0 0 512 512"><path fill="#343a40" d="M462 241.640l-22-84.840c-9.600-35.200-41.600-60.800-76.800-60.800H352V64c0-17.670-14.330-32-32-32H192c-17.670 0-32 14.330-32 32v32h-11.200c-35.200 0-67.200 25.600-76.800 60.800l-22 84.840C21.410 248.040 0 273.470 0 304v48c0 23.630 12.950 44.040 32 55.120V448c0 17.670 14.330 32 32 32h32c17.670 0 32-14.330 32-32v-32h256v32c0 17.670 14.330 32 32 32h32c17.670 0 32-14.330 32-32v-40.880c19.050-11.090 32-31.500 32-55.120v-48c0-30.530-21.410-55.960-50-62.360zM96 352c-17.670 0-32-14.330-32-32s14.330-32 32-32 32 14.330 32 32-14.330 32-32 32zm20.550-112l17.200-66.360c2.230-8.160 9.590-13.640 15.060-13.640h214.400c5.470 0 12.830 5.480 14.850 12.860L395.450 240h-278.900zM416 352c-17.670 0-32-14.330-32-32s14.330-32 32-32 32 14.330 32 32-14.330 32-32 32z"/></svg>
<p class="t " style="top:427.14px;font-size:14.72px;color:#343a40;left:57.30px;letter-spacing:-0.7px;">Car</p>
<svg class="i" style="left:228.90px;top:424.40px;" width="8.00" height="16.00" viewBox="0 0 256 512"><path fill="#343a40" d="M31.700 239l136-136c9.400-9.400 24.600-9.400 33.900 0l22.600 22.600c9.400 9.400 9.400 24.600 0 33.900L127.900 256l96.400 96.400c9.400 9.400 9.400 24.600 0 33.900L201.700 409c-9.400 9.400-24.600 9.400-33.900 0l-136-136c-9.500-9.400-9.500-24.600-.1-34z"/></svg>
</li>
<li>
<svg class="i" style="left:27.85px;top:466.75px;" width="19.80" height="17.60" viewBox="0 0 576 512"><path fill="#343a40" d="M572.694 292.093L500.270 416.248A63.997 63.997 0 0 1 444.989 448H45.025c-18.523 0-30.064-20.093-20.731-36.093l72.424-124.155A64 64 0 0 1 152 256h399.964c18.523 0 30.064 20.093 20.730 36.093zM152 224h328v-48c0-26.510-21.490-48-48-48H272l-64-64H48C21.490 64 0 85.490 0 112v278.046l69.077-118.418C86.214 242.250 117.989 224 152 224z"/></svg>
<p class="t " style="top:470.29px;font-size:14.72px;color:#343a40;left:57.30px;letter-spacing:-0.7px;">Visa</p>
<svg class="i" style="left:228.90px;top:467.55px;" width="8.00" height="16.00" viewBox="0 0 256 512"><path fill="#343a40" d="M31.700 239l136-136c9.400-9.400 24.600-9.400 33.900 0l22.600 22.600c9.400 9.400 9.400 24.600 0 33.900L127.900 256l96.400 96.400c9.400 9.400 9.400 24.600 0 33.900L201.700 409c-9.400 9.400-24.600 9.400-33.900 0l-136-136c-9.500-9.400-9.500-24.600-.1-34z"/></svg>
</li>
<li>
<svg class="i" style="left:26.75px;top:509.90px;" width="22.00" height="17.60" viewBox="0 0 640 512"><path fill="#343a40" d="M608 64H32C14.330 64 0 78.330 0 96v320c0 17.670 14.330 32 32 32h576c17.670 0 32-14.330 32-32V96c0-17.670-14.330-32-32-32zM48 400v-64c35.350 0 64 28.650 64 64H48zm0-224v-64h64c0 35.350-28.650 64-64 64zm272 176c-44.190 0-80-42.990-80-96 0-53.020 35.820-96 80-96s80 42.980 80 96c0 53.030-35.830 96-80 96zm272 48h-64c0-35.350 28.650-64 64-64v64zm0-224c-35.350 0-64-28.650-64-64h64v64z"/></svg>
<p class="t " style="top:513.44px;font-size:14.72px;color:#343a40;left:57.30px;">Reports</p>
<svg class="i" style="left:228.90px;top:510.70px;" width="8.00" height="16.00" viewBox="0 0 256 512"><path fill="#343a40" d="M31.700 239l136-136c9.400-9.400 24.600-9.400 33.900 0l22.600 22.600c9.400 9.400 9.400 24.600 0 33.900L127.900 256l96.400 96.400c9.400 9.400 9.400 24.600 0 33.900L201.700 409c-9.400 9.400-24.600 9.400-33.900 0l-136-136c-9.500-9.400-9.500-24.600-.1-34z"/></svg>
</li>
<li>
<svg class="i" style="left:31.15px;top:553.05px;" width="13.20" height="17.60" viewBox="0 0 384 512"><path fill="#343a40" d="M224 136V0H24C10.700 0 0 10.700 0 24v464c0 13.300 10.700 24 24 24h336c13.300 0 24-10.700 24-24V160H248c-13.200 0-24-10.800-24-24zm160-14.100v6.100H256V0h6.100c6.400 0 12.500 2.500 17 7l97.900 98c4.500 4.500 7 10.600 7 16.900z"/></svg>
<p class="t " style="top:556.59px;font-size:14.72px;color:#343a40;left:57.30px;">MasterPage Translation</p>
<svg class="i" style="left:228.90px;top:553.85px;" width="8.00" height="16.00" viewBox="0 0 256 512"><path fill="#343a40" d="M31.700 239l136-136c9.400-9.400 24.600-9.400 33.900 0l22.600 22.600c9.400 9.400 9.400 24.600 0 33.900L127.900 256l96.400 96.400c9.400 9.400 9.400 24.600 0 33.900L201.700 409c-9.400 9.400-24.600 9.400-33.900 0l-136-136c-9.500-9.400-9.500-24.600-.1-34z"/></svg>
</li>
<li>
<svg class="i" style="left:26.75px;top:596.20px;" width="22.00" height="17.60" viewBox="0 0 640 512"><path fill="#343a40" d="M152.100 236.200c-3.500-12.100-7.800-33.200-7.800-33.200h-.5s-4.300 21.100-7.800 33.200l-11.100 37.500H163zM616 96H336v320h280c13.300 0 24-10.700 24-24V120c0-13.300-10.700-24-24-24zm-24 120c0 6.600-5.400 12-12 12h-11.400c-6.900 23.600-21.700 47.400-42.700 69.900 8.400 6.400 17.100 12.500 26.100 18 5.500 3.400 7.300 10.500 4.100 16.200l-7.900 13.900c-3.400 5.900-10.900 7.800-16.700 4.300-12.600-7.800-24.500-16.100-35.400-24.900-10.900 8.700-22.700 17.100-35.400 24.900-5.800 3.500-13.300 1.600-16.700-4.300l-7.900-13.900c-3.200-5.600-1.400-12.800 4.200-16.200 9.300-5.700 18-11.700 26.100-18-7.900-8.400-14.900-17-21-25.700-4-5.700-2.200-13.600 3.700-17.100l6.500-3.900 7.300-4.300c5.400-3.200 12.400-1.700 16 3.400 5 7 10.800 14 17.400 20.900 13.500-14.200 23.800-28.900 30-43.200H412c-6.600 0-12-5.400-12-12v-16c0-6.600 5.400-12 12-12h64v-16c0-6.600 5.400-12 12-12h16c6.600 0 12 5.400 12 12v16h64c6.600 0 12 5.400 12 12zM0 120v272c0 13.300 10.700 24 24 24h280V96H24c-13.300 0-24 10.700-24 24zm58.900 216.100L116.400 167c1.700-4.900 6.200-8.100 11.400-8.100h32.500c5.100 0 9.700 3.300 11.400 8.100l57.500 169.100c2.600 7.800-3.100 15.900-11.400 15.900h-22.900a12 12 0 0 1-11.500-8.600l-9.400-31.900h-60.200l-9.100 31.800c-1.500 5.200-6.200 8.700-11.500 8.700H70.300c-8.200 0-14-8.100-11.400-15.900z"/></svg>
<p class="t " style="top:599.74px;font-size:14.72px;color:#343a40;left:57.30px;">Website Translation</p>
<svg class="i" style="left:228.90px;top:597.00px;" width="8.00" height="16.00" viewBox="0 0 256 512"><path fill="#343a40" d="M31.700 239l136-136c9.400-9.400 24.600-9.400 33.900 0l22.600 22.600c9.400 9.400 9.400 24.600 0 33.900L127.900 256l96.400 96.400c9.400 9.400 9.400 24.600 0 33.900L201.700 409c-9.400 9.400-24.600 9.400-33.900 0l-136-136c-9.500-9.400-9.500-24.600-.1-34z"/></svg>
</li>
<li>
<svg class="i" style="left:29.23px;top:639.35px;" width="17.05" height="17.60" viewBox="0 0 496 512"><path fill="#343a40" d="M336.500 160C322 70.700 287.800 8 248 8s-74 62.700-88.500 152h177zM152 256c0 22.200 1.200 43.500 3.300 64h185.300c2.100-20.500 3.300-41.800 3.300-64s-1.200-43.500-3.300-64H155.300c-2.100 20.500-3.300 41.800-3.300 64zm324.700-96c-28.600-67.900-86.500-120.400-158-141.600 24.400 33.800 41.200 84.700 50 141.600h108zM177.200 18.400C105.800 39.600 47.800 92.100 19.300 160h108c8.700-56.900 25.500-107.800 49.900-141.600zM487.400 192H372.700c2.100 21 3.300 42.500 3.300 64s-1.200 43-3.300 64h114.600c5.500-20.500 8.600-41.800 8.600-64s-3.100-43.500-8.500-64zM120 256c0-21.500 1.200-43 3.300-64H8.600C3.200 212.500 0 233.800 0 256s3.200 43.500 8.600 64h114.600c-2-21-3.200-42.500-3.200-64zm39.500 96c14.500 89.300 48.700 152 88.500 152s74-62.700 88.500-152h-177zm159.300 141.600c71.400-21.200 129.400-73.700 158-141.600h-108c-8.800 56.900-25.600 107.800-50 141.600zM19.300 352c28.600 67.900 86.500 120.400 158 141.600-24.400-33.800-41.200-84.700-50-141.600h-108z"/></svg>
<p class="t " style="top:642.89px;font-size:14.72px;color:#343a40;left:57.30px;">Website Management</p>
<svg class="i" style="left:228.90px;top:640.15px;" width="8.00" height="16.00" viewBox="0 0 256 512"><path fill="#343a40" d="M31.700 239l136-136c9.400-9.400 24.600-9.400 33.900 0l22.600 22.600c9.400 9.400 9.400 24.600 0 33.900L127.900 256l96.400 96.400c9.400 9.400 9.400 24.600 0 33.900L201.700 409c-9.400 9.400-24.600 9.400-33.900 0l-136-136c-9.500-9.400-9.500-24.600-.1-34z"/></svg>
</li>
</ul></aside>
</body></html>
